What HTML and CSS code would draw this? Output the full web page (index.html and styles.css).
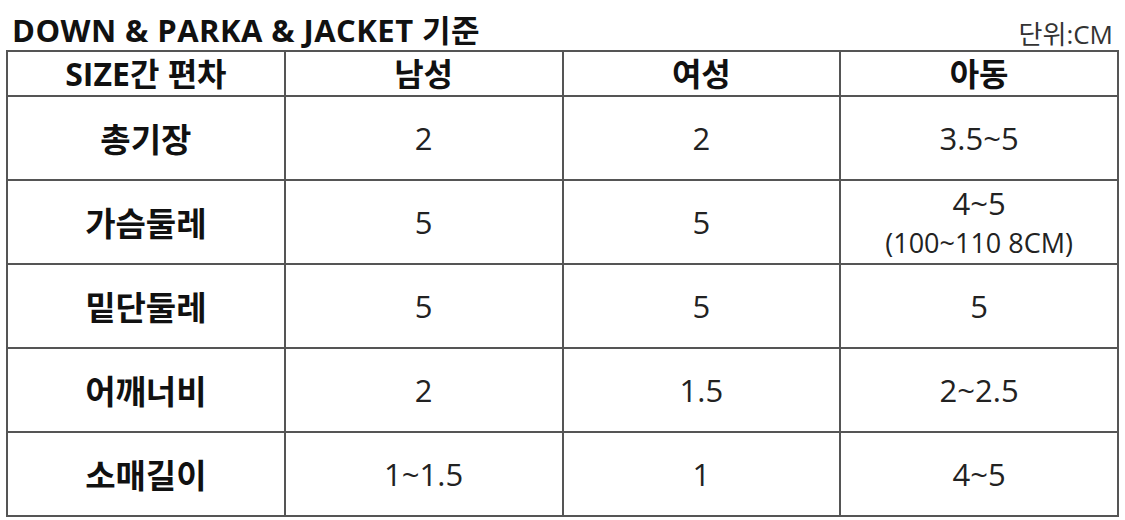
FILE: index.html
```html
<!DOCTYPE html>
<html lang="ko">
<head>
<meta charset="utf-8">
<link rel="stylesheet" href="styles.css">
</head>
<body>
<div class="page">
  <div class="head">
    <h1 class="title">DOWN &amp; PARKA &amp; JACKET 기준</h1>
    <span class="unit">단위:CM</span>
  </div>
  <table class="size">
    <colgroup><col><col><col><col></colgroup>
    <thead>
      <tr><th>SIZE간 편차</th><th>남성</th><th>여성</th><th>아동</th></tr>
    </thead>
    <tbody>
      <tr><th>총기장</th><td>2</td><td>2</td><td>3.5~5</td></tr>
      <tr><th>가슴둘레</th><td>5</td><td>5</td><td>4~5<br><span class="note">(100~110 8CM)</span></td></tr>
      <tr><th>밑단둘레</th><td>5</td><td>5</td><td>5</td></tr>
      <tr><th>어깨너비</th><td>2</td><td>1.5</td><td>2~2.5</td></tr>
      <tr><th>소매길이</th><td>1~1.5</td><td>1</td><td>4~5</td></tr>
    </tbody>
  </table>
</div>
</body>
</html>
```
FILE: styles.css
```css
html, body {
  margin: 0;
  padding: 0;
  background: #fff;
}
body {
  font-family: "Open Sans", "Noto Sans CJK KR", sans-serif;
  color: #222;
}
.page {
  width: 1125px;
  height: 520px;
  padding: 0 6px 0 6px;
  box-sizing: border-box;
}
.head {
  display: flex;
  justify-content: space-between;
  align-items: flex-end;
  height: 50px;
}
.title {
  margin: 0 0 0 6px;
  font-size: 31px;
  font-weight: 700;
  color: #111;
  line-height: 40px;
  letter-spacing: 0.45px;
}
.unit {
  font-size: 26px;
  color: #333;
  margin: 0 6px -1px 0;
  line-height: 34px;
}
.size {
  border-collapse: collapse;
  width: 1113px;
  table-layout: fixed;
}
.size th, .size td {
  border: 2px solid #555;
  text-align: center;
  vertical-align: middle;
  padding: 0;
}
.size thead th {
  height: 43px;
  font-size: 32px;
  font-weight: 700;
  color: #111;
  line-height: 42px;
}
.size tbody th {
  height: 82px;
  font-size: 33px;
  font-weight: 700;
  color: #111;
}
.size td {
  font-size: 31px;
  font-weight: 400;
  color: #222;
  line-height: 38px;
}
.note {
  font-size: 27px;
  line-height: 32px;
}
```
